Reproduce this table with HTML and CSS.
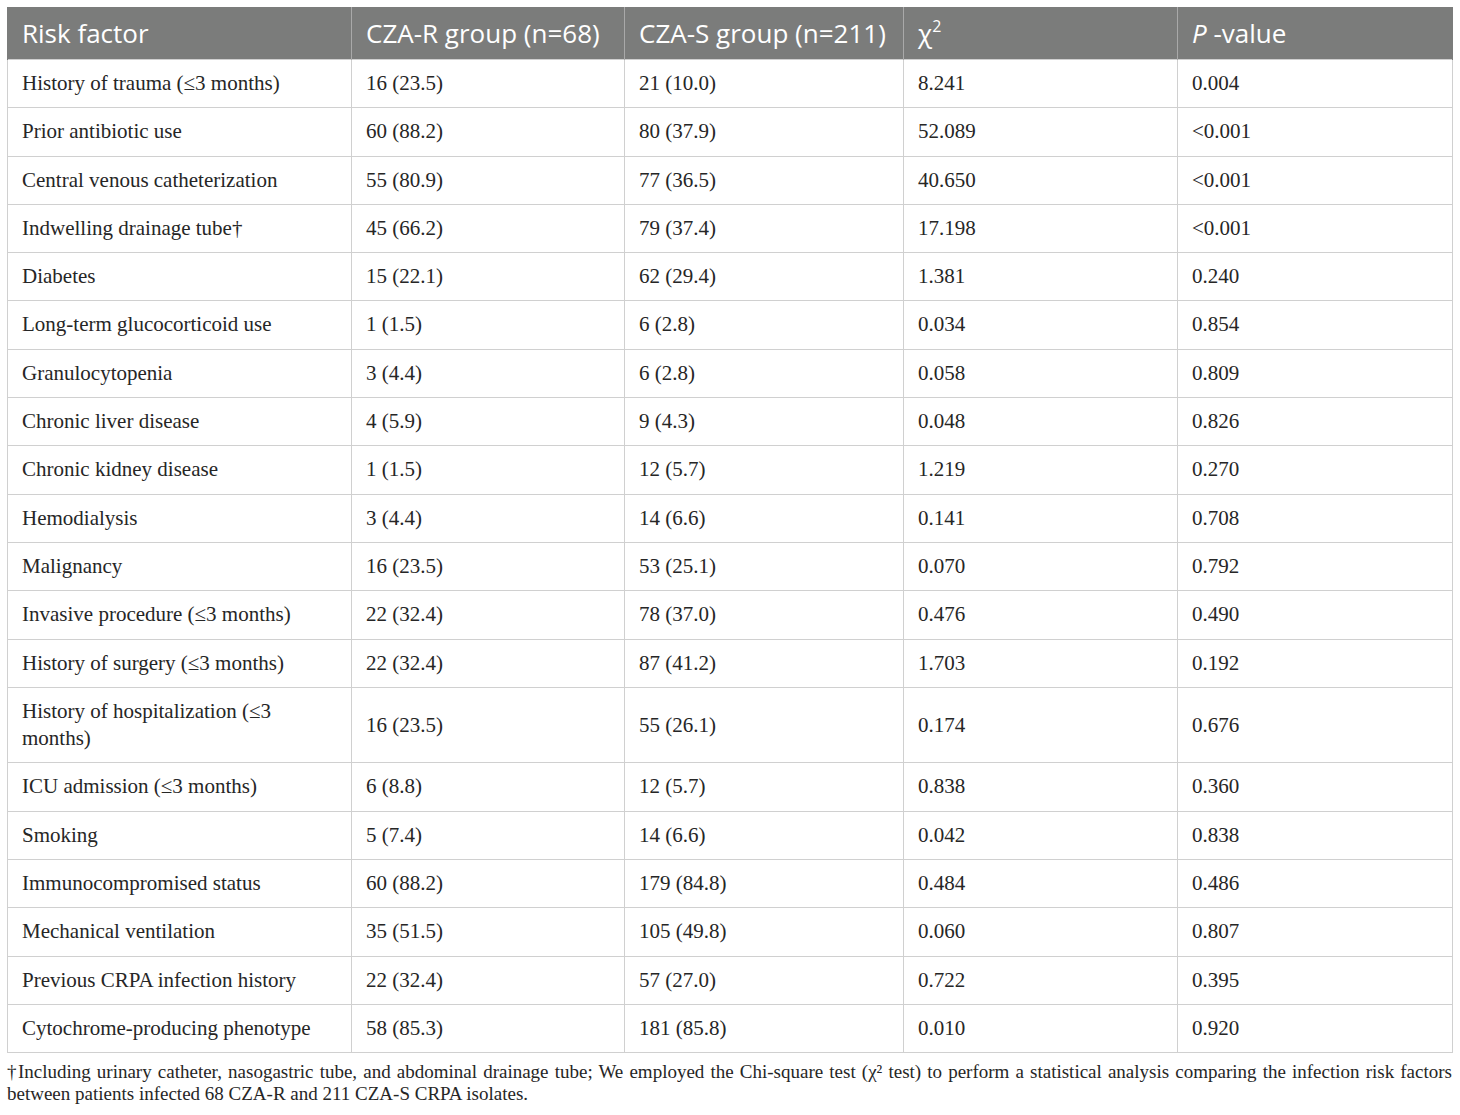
FILE: index.html
```html
<!DOCTYPE html>
<html>
<head>
<meta charset="utf-8">
<link rel="stylesheet" href="styles.css">
</head>
<body>
<div class="wrap">
<table class="risk">
<colgroup>
<col class="c1"><col class="c2"><col class="c3"><col class="c4"><col class="c5">
</colgroup>
<thead>
<tr><th>Risk factor</th><th>CZA-R group (n=68)</th><th>CZA-S group (n=211)</th><th><span class="chi">χ</span><sup>2</sup></th><th><i>P</i> -value</th></tr>
</thead>
<tbody>
<tr><td>History of trauma (≤3 months)</td><td>16 (23.5)</td><td>21 (10.0)</td><td>8.241</td><td>0.004</td></tr>
<tr><td>Prior antibiotic use</td><td>60 (88.2)</td><td>80 (37.9)</td><td>52.089</td><td>&lt;0.001</td></tr>
<tr><td>Central venous catheterization</td><td>55 (80.9)</td><td>77 (36.5)</td><td>40.650</td><td>&lt;0.001</td></tr>
<tr><td>Indwelling drainage tube†</td><td>45 (66.2)</td><td>79 (37.4)</td><td>17.198</td><td>&lt;0.001</td></tr>
<tr><td>Diabetes</td><td>15 (22.1)</td><td>62 (29.4)</td><td>1.381</td><td>0.240</td></tr>
<tr><td>Long-term glucocorticoid use</td><td>1 (1.5)</td><td>6 (2.8)</td><td>0.034</td><td>0.854</td></tr>
<tr><td>Granulocytopenia</td><td>3 (4.4)</td><td>6 (2.8)</td><td>0.058</td><td>0.809</td></tr>
<tr><td>Chronic liver disease</td><td>4 (5.9)</td><td>9 (4.3)</td><td>0.048</td><td>0.826</td></tr>
<tr><td>Chronic kidney disease</td><td>1 (1.5)</td><td>12 (5.7)</td><td>1.219</td><td>0.270</td></tr>
<tr><td>Hemodialysis</td><td>3 (4.4)</td><td>14 (6.6)</td><td>0.141</td><td>0.708</td></tr>
<tr><td>Malignancy</td><td>16 (23.5)</td><td>53 (25.1)</td><td>0.070</td><td>0.792</td></tr>
<tr><td>Invasive procedure (≤3 months)</td><td>22 (32.4)</td><td>78 (37.0)</td><td>0.476</td><td>0.490</td></tr>
<tr><td>History of surgery (≤3 months)</td><td>22 (32.4)</td><td>87 (41.2)</td><td>1.703</td><td>0.192</td></tr>
<tr><td>History of hospitalization (≤3 months)</td><td>16 (23.5)</td><td>55 (26.1)</td><td>0.174</td><td>0.676</td></tr>
<tr><td>ICU admission (≤3 months)</td><td>6 (8.8)</td><td>12 (5.7)</td><td>0.838</td><td>0.360</td></tr>
<tr><td>Smoking</td><td>5 (7.4)</td><td>14 (6.6)</td><td>0.042</td><td>0.838</td></tr>
<tr><td>Immunocompromised status</td><td>60 (88.2)</td><td>179 (84.8)</td><td>0.484</td><td>0.486</td></tr>
<tr><td>Mechanical ventilation</td><td>35 (51.5)</td><td>105 (49.8)</td><td>0.060</td><td>0.807</td></tr>
<tr><td>Previous CRPA infection history</td><td>22 (32.4)</td><td>57 (27.0)</td><td>0.722</td><td>0.395</td></tr>
<tr><td>Cytochrome-producing phenotype</td><td>58 (85.3)</td><td>181 (85.8)</td><td>0.010</td><td>0.920</td></tr>
</tbody>
</table>
<p class="note">†Including urinary catheter, nasogastric tube, and abdominal drainage tube; We employed the Chi-square test (χ² test) to perform a statistical analysis comparing the infection risk factors between patients infected 68 CZA-R and 211 CZA-S CRPA isolates.</p>
</div>
</body>
</html>
```
FILE: styles.css
```css
html, body {
  margin: 0;
  padding: 0;
  background: #ffffff;
}
.wrap {
  padding: 7px 8px 0 7px;
}
.risk {
  width: 1445px;
  border-collapse: collapse;
  table-layout: fixed;
}
.c1 { width: 344px; }
.c2 { width: 273px; }
.c3 { width: 279px; }
.c4 { width: 274px; }
.c5 { width: 275px; }
.risk th {
  background: #7b7c7b;
  color: #ffffff;
  font-family: "Open Sans", "Noto Sans", sans-serif;
  font-weight: 400;
  font-size: 26px;
  line-height: 32px;
  text-align: left;
  padding: 10px 14px 10px 14px;
  border-left: 1px solid #a9a9a9;
  border-right: 1px solid #a9a9a9;
  white-space: nowrap;
}
.risk th:first-child { border-left: 1px solid #7b7c7b; }
.risk th:last-child { border-right: 1px solid #7b7c7b; }
.risk th sup {
  font-size: 16px;
  line-height: 0;
  vertical-align: 11px;
}
.risk th i { font-style: italic; }
.risk td {
  font-family: "Liberation Serif", "DejaVu Serif", serif;
  font-size: 21px;
  line-height: 27.3px;
  color: #262626;
  padding: 10px 14px 10px 14px;
  border: 1px solid #d0d0d0;
  vertical-align: middle;
}
.note {
  margin: 8px 0 0 0;
  font-family: "Liberation Serif", "DejaVu Serif", serif;
  font-size: 19px;
  line-height: 22px;
  color: #262626;
  text-align: justify;
}
```
